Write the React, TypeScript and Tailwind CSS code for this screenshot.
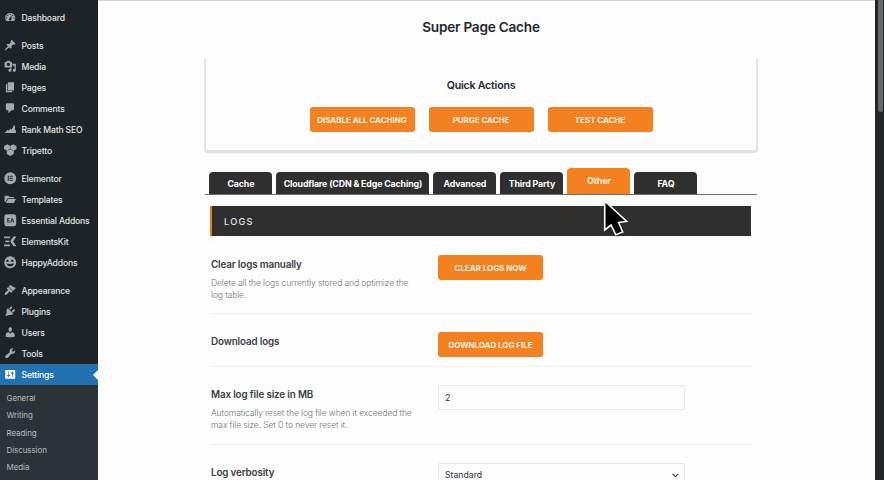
import type { ReactNode } from "react";

const icons: Record<string, ReactNode> = {
  dashboard: <path d="M3.76 16h12.48c1.1-1.37 1.76-3.11 1.76-5 0-4.42-3.58-8-8-8s-8 3.58-8 8c0 1.89.66 3.63 1.76 5zM10 4c.55 0 1 .45 1 1s-.45 1-1 1-1-.45-1-1 .45-1 1-1zM6 6c.55 0 1 .45 1 1s-.45 1-1 1-1-.45-1-1 .45-1 1-1zm8 0c.55 0 1 .45 1 1s-.45 1-1 1-1-.45-1-1 .45-1 1-1zm-5.37 5.55L12 7v6c0 1.1-.9 2-2 2s-2-.9-2-2c0-.57.24-1.08.63-1.45zM4 10c.55 0 1 .45 1 1s-.45 1-1 1-1-.45-1-1 .45-1 1-1zm12 0c.55 0 1 .45 1 1s-.45 1-1 1-1-.45-1-1 .45-1 1-1z" />,
  post: <path d="M10.44 3.02l1.82-1.82 6.36 6.35-1.83 1.82c-1.05-.68-2.48-.57-3.41.36l-.75.75c-.92.93-1.04 2.35-.35 3.41l-1.83 1.82-2.41-2.41-2.8 2.79c-.42.42-3.38 2.71-3.8 2.29s1.86-3.39 2.28-3.81l2.79-2.79L4.1 9.36l1.83-1.82c1.05.69 2.48.57 3.4-.36l.75-.75c.93-.92 1.05-2.35.36-3.41z" />,
  media: <path d="M13 11V4c0-.55-.45-1-1-1h-1.67L9 1H5L3.67 3H2c-.55 0-1 .45-1 1v7c0 .55.45 1 1 1h10c.55 0 1-.45 1-1zM7 4.5c1.38 0 2.5 1.12 2.5 2.5S8.38 9.5 7 9.5 4.5 8.38 4.5 7 5.62 4.5 7 4.500zM14 6h5v10.500c0 1.380-1.120 2.500-2.500 2.500S14 17.880 14 16.500s1.120-2.500 2.500-2.500c.17 0 .34.02.5.05V9h-3V6zm-4 8.050V13h2v3.500c0 1.380-1.120 2.500-2.500 2.500S7 17.880 7 16.500 8.120 14 9.500 14c.17 0 .34.02.5.05z" />,
  page: <path d="M6 15V2h10v13H6zm-1 1h8v2H3V5h2v11z" />,
  comment: <path d="M5 2h9c1.1 0 2 .9 2 2v7c0 1.1-.9 2-2 2h-2l-5 5v-5H5c-1.1 0-2-.9-2-2V4c0-1.1.9-2 2-2z" />,
  rank: <path d="M1 16l4.500-5h1.700v2.200L10 9h1.700v2.700L15 5.500V4h2.500v7H19v5z" />,
  tripetto: <path d="M5.200 .3L10 3l4.800-2.700L20 3.400v4.400l-4.400 2.700v5.300L10 19.300l-5.600-3.500v-5.300L0 7.800V3.400zM9.700 3.900v3.700L5.200 10.200l.3.600L10 8.200l4.500 2.600.3-.6-4.500-2.600V3.900z" fillRule="evenodd" />,
  elementor: <path d="M10 .5a9.500 9.500 0 100 19 9.500 9.500 0 000-19zM6 6h1.700v8H6zm3 0h5v1.600H9zm0 3.200h5v1.600H9zm0 3.200h5V14H9z" fillRule="evenodd" />,
  templates: <path d="M1 4.500h6l2 2h7v2H6L2.500 14 1 14.500zM6.800 9.500H19L15.800 16H2.500z" />,
  essential: <path d="M5 .5h10q4.500 0 4.500 4.500v10q0 4.500-4.500 4.500H5Q.5 19.500 .5 15V5Q.5 .5 5 .5zm.3 5.800v7.400h4.200v-1.200H6.600v-1.900H9V9.400H6.600V7.500h2.900V6.300zm7.200 0L10 13.700h1.300l.5-1.700h2.600l.6 1.700h1.300l-2.500-7.400zm.6 1.700l.9 2.800h-1.800z" fillRule="evenodd" />,
  kit: <path d="M0 2.200h9.500V5H0zM2 8.600h6.500v2.800H2zM0 15h9.500v2.800H0zM15 2.200h4.800L14.600 10l5.200 7.800H15L10 10z" />,
  happy: <path d="M10 .5c2 0 3.200.7 4.200 1.700L17 2l-.4 2.500C19 6.500 19.800 9 19.300 12c-.8 4.500-4.500 7.500-9.300 7.500S.7 16 .5 11 4.500.5 10 .5zM4 6.500c-.7 1.500-.5 2.500.3 3.500L8 8.500C7.500 6.500 6 5.500 4 6.500zm8-.5c-1 .6-1.300 1.500-1 2.700l4.500.3c.3-2-1.300-3.800-3.500-3zM4 12c1.500 3.500 3.500 4.700 6.500 4.500 3-.2 5-2 5.500-5-4 1.500-8 1.700-12 .5z" fillRule="evenodd" />,
  appearance: <path d="M14.480 11.060L7.410 3.990l1.500-1.500c.5-.56 2.300-.47 3.510.32 1.210.8 1.430 1.280 2.910 2.100 1.180.64 2.450 1.260 4.450.85zm-.71.71L6.700 4.700 4.930 6.470c-.39.39-.39 1.020 0 1.410l1.060 1.060c.39.39.39 1.030 0 1.420-.6.6-1.430 1.110-2.210 1.690-.35.26-.7.53-1.010.84C1.430 14.230.4 16.080 1.400 17.070c.99 1 2.840-.03 4.180-1.360.31-.31.58-.66.85-1.020.57-.78 1.080-1.610 1.690-2.210.39-.39 1.020-.39 1.410 0l1.060 1.060c.39.39 1.020.39 1.410 0z" />,
  plugins: <path d="M13.110 4.360L9.870 7.600 8 5.730l3.240-3.240c.35-.34 1.050-.2 1.560.32.52.51.66 1.210.31 1.550zm-8 1.770l.91-1.120 9.010 9.010-1.190.84c-.71.71-2.630 1.160-3.820 1.160H6.140L4.900 17.260c-.59.59-1.540.59-2.120 0-.59-.58-.59-1.530 0-2.120l1.240-1.240v-3.880c0-1.130.4-3.190 1.090-3.890zm7.260 3.970l3.240-3.240c.34-.35 1.040-.21 1.550.31.52.51.66 1.210.31 1.550l-3.240 3.250z" />,
  users: <path d="M10 9.250c-2.270 0-2.730-3.440-2.730-3.440C7 4.020 7.820 2 9.970 2c2.160 0 2.980 2.020 2.710 3.810 0 0-.41 3.440-2.680 3.440zm0 2.570L12.720 10c2.390 0 4.520 2.330 4.520 4.530v2.490s-3.650 1.130-7.240 1.130c-3.650 0-7.240-1.130-7.240-1.130v-2.490c0-2.250 1.940-4.480 4.470-4.480z" />,
  tools: <path d="M16.680 9.770c-1.340 1.340-3.300 1.670-4.950.99l-5.410 6.520c-.99.99-2.590.99-3.580 0s-.99-2.590 0-3.570l6.520-5.420c-.68-1.650-.35-3.610.99-4.950 1.280-1.280 3.120-1.620 4.720-1.060l-2.890 2.890 2.820 2.820 2.860-2.870c.53 1.580.18 3.390-1.080 4.650z" />,
  settings: <path d="M18 16V4c0-.55-.45-1-1-1H3c-.55 0-1 .45-1 1v12c0 .55.45 1 1 1h14c.55 0 1-.45 1-1zM8 11h1c.55 0 1 .45 1 1s-.45 1-1 1H8v1.500c0 .28-.22.5-.5.5s-.5-.22-.5-.5V13H6c-.55 0-1-.45-1-1s.45-1 1-1h1V5.500c0-.28.22-.5.5-.5s.5.22.5.5V11zm5-2h-1c-.55 0-1-.45-1-1s.45-1 1-1h1V5.500c0-.28.22-.5.5-.5s.5.22.5.5V7h1c.55 0 1 .45 1 1s-.45 1-1 1h-1v5.500c0 .28-.22.5-.5.5s-.5-.22-.5-.5V9z" />,
};

const groups: [string, string][][] = [
  [["dashboard", "Dashboard"]],
  [
    ["post", "Posts"],
    ["media", "Media"],
    ["page", "Pages"],
    ["comment", "Comments"],
    ["rank", "Rank Math SEO"],
    ["tripetto", "Tripetto"],
  ],
  [
    ["elementor", "Elementor"],
    ["templates", "Templates"],
    ["essential", "Essential Addons"],
    ["kit", "ElementsKit"],
    ["happy", "HappyAddons"],
  ],
  [
    ["appearance", "Appearance"],
    ["plugins", "Plugins"],
    ["users", "Users"],
    ["tools", "Tools"],
    ["settings", "Settings"],
  ],
];

function MenuItem({ icon, label }: { icon: string; label: string }) {
  const active = icon === "settings";
  return (
    <a
      className={
        active
          ? "relative flex h-[21px] items-center gap-[5px] bg-[#2271b1] pl-[4px] text-white"
          : "flex h-[21px] items-center gap-[5px] pl-[4px] text-[#e3e4e5]"
      }
    >
      <svg viewBox="0 0 20 20" className={active ? "size-[12.500px] shrink-0 fill-white" : "size-[12.500px] shrink-0 fill-[#a7aaad]"}>
        {icons[icon]}
      </svg>
      <span className="pt-px text-[8.600px] font-medium tracking-[-0.17px] whitespace-nowrap">{label}</span>
      {active && (
        <svg viewBox="0 0 5 10" className="absolute top-[5.500px] right-0 h-[10px] w-[5px] fill-[#fdfdfd]">
          <path d="M5 0v10L0 5z" />
        </svg>
      )}
    </a>
  );
}

function Sidebar() {
  return (
    <aside className="flex h-[480px] w-[98px] shrink-0 flex-col overflow-hidden bg-[#1d2327] pt-[7px]">
      <nav className="flex flex-col gap-[7px]">
        {groups.map((g, i) => (
          <div key={i} className="flex flex-col">
            {g.map(([icon, label]) => (
              <MenuItem key={icon} icon={icon} label={label} />
            ))}
          </div>
        ))}
      </nav>
      <div className="flex grow flex-col bg-[#2c3338] pt-[5px] pl-[6.500px] text-[8px] leading-[17.300px] tracking-[-0.08px] text-[#b9bcbf]">
        {["General", "Writing", "Reading", "Discussion", "Media"].map((s) => (
          <a key={s}>{s}</a>
        ))}
      </div>
    </aside>
  );
}

function Button({ children }: { children: ReactNode }) {
  return (
    <button className="flex h-[25px] w-[105px] items-center justify-center rounded-[3px] bg-[#f4811f] text-[8px] font-bold tracking-[-0.04px] whitespace-nowrap text-[#fff1e2]">
      {children}
    </button>
  );
}

const tabs: [string, string][] = [
  ["Cache", "w-[63px]"],
  ["Cloudflare (CDN & Edge Caching)", "w-[153px]"],
  ["Advanced", "w-[63px]"],
  ["Third Party", "w-[63px]"],
  ["Other", "w-[63px]"],
  ["FAQ", "w-[63px]"],
];

function Tabs() {
  return (
    <div className="mt-[14px] ml-[107px] flex h-[28px] w-[552px] shrink-0 items-end gap-[4px] border-b border-[#6b6b6b] pl-[4.400px] text-[8.800px] font-bold tracking-[-0.14px] whitespace-nowrap text-white">
      {tabs.map(([label, width]) => (
        <div
          key={label}
          className={
            label === "Other"
              ? `${width} flex h-[26px] items-center justify-center rounded-t-[4px] bg-[#f4811f] text-[#fff1e2]`
              : `${width} flex h-[22px] items-center justify-center rounded-t-[4px] bg-[#2f2f2f] pt-px`
          }
        >
          {label}
        </div>
      ))}
    </div>
  );
}

function Setting({ title, help, children, className }: { title: string; help?: ReactNode; children: ReactNode; className: string }) {
  return (
    <div className={`flex w-[541px] shrink-0 border-b border-[#f1f1f1] ${className}`}>
      <div className="w-[227px] shrink-0">
        <h3 className="pt-[2.500px] text-[9.800px] leading-[14px] font-semibold tracking-[-0.13px] text-[#3c4043]">{title}</h3>
        {help && <p className="mt-[5px] text-[8.500px] leading-[12.400px] font-light tracking-[-0.1px] whitespace-nowrap text-[#72777b]">{help}</p>}
      </div>
      {children}
    </div>
  );
}

function Cursor() {
  return (
    <svg viewBox="0 0 26 40" className="absolute top-[198px] left-[603px] h-[40px] w-[26px] drop-shadow-[0_1px_1px_rgba(0,0,0,0.4)]">
      <path d="M1.700 3V32L8 27L12.800 36.800L19.700 34L15.600 24.500L23.700 23.500Z" fill="#000" stroke="#fff" strokeWidth="1.600" />
    </svg>
  );
}

export default function App() {
  return (
    <div className="relative flex h-[480px] w-[884px] overflow-hidden bg-[#fdfdfd] font-['Inter','Liberation_Sans',sans-serif]">
      <Sidebar />
      <main className="flex h-[480px] w-[777px] shrink-0 flex-col overflow-hidden">
        <div className="h-px shrink-0 bg-[#d5d5d5]" />
        <h1 className="mt-[16px] ml-[107px] w-[552px] shrink-0 text-center text-[13.600px] leading-[20px] font-semibold tracking-[-0.22px] text-[#23282d]">
          Super Page Cache
        </h1>
        <section className="mt-[22px] ml-[106px] flex h-[94px] w-[554px] shrink-0 flex-col items-center rounded-b-[4px] border-x-2 border-b-[3px] border-[#e2e2e2] pt-[19px]">
          <h2 className="text-[10.600px] leading-[15px] font-semibold tracking-[-0.2px] text-[#23282d]">Quick Actions</h2>
          <div className="mt-[14px] flex gap-[14px]">
            <Button>DISABLE ALL CACHING</Button>
            <Button>PURGE CACHE</Button>
            <Button>TEST CACHE</Button>
          </div>
        </section>
        <Tabs />
        <div className="mt-[11px] ml-[112px] flex h-[30px] w-[541px] shrink-0 items-center border-l-2 border-[#e07a22] bg-[#2f2f2f] pt-px pl-[12px] text-[9.200px] font-medium tracking-[1.200px] text-[#e4e4e4]">
          LOGS
        </div>
        <div className="ml-[113px] flex flex-col">
          <Setting title="Clear logs manually" className="h-[78px] pt-[19px]" help={<>Delete all the logs currently stored and optimize the<br />log table.</>}>
            <Button>CLEAR LOGS NOW</Button>
          </Setting>
          <Setting title="Download logs" className="h-[53px] pt-[18px]">
            <Button>DOWNLOAD LOG FILE</Button>
          </Setting>
          <Setting title="Max log file size in MB" className="h-[78px] pt-[18px]" help={<>Automatically reset the log file when it exceeded the<br />max file size. Set 0 to never reset it.</>}>
            <div className="flex h-[25px] w-[247px] items-center rounded-[2px] border border-[#e6e6e6] pl-[6px] text-[9px] text-[#2c3338]">2</div>
          </Setting>
          <Setting title="Log verbosity" className="h-[77px] pt-[18px]">
            <div className="flex h-[25px] w-[247px] items-center justify-between rounded-[2px] border border-[#e6e6e6] pr-[5px] pl-[6px] text-[8.700px] text-[#2c3338]">
              Standard
              <svg viewBox="0 0 7 5" className="h-[5px] w-[7px] fill-none stroke-[#444] stroke-[1.200]">
                <path d="M.7.9l2.800 2.800L6.300.9" />
              </svg>
            </div>
          </Setting>
        </div>
      </main>
      <div className="flex h-[480px] w-[9px] shrink-0 justify-center bg-[#242526] pl-px">
        <div className="h-[112px] w-[5px] rounded-b-[3px] bg-[#656868]" />
      </div>
      <Cursor />
    </div>
  );
}
